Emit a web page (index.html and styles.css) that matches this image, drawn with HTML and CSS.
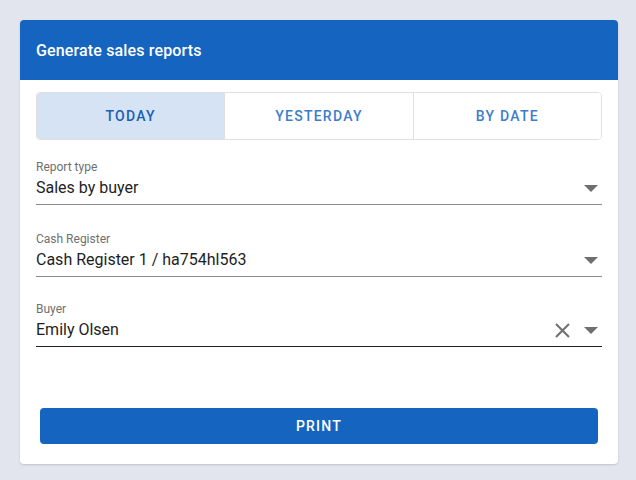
FILE: index.html
```html
<!DOCTYPE html>
<html lang="en">
<head>
  <meta charset="UTF-8" />
  <meta name="viewport" content="width=device-width, initial-scale=1" />
  <title>Generate sales reports</title>
  <link rel="stylesheet" href="styles.css">
</head>
<body>

  <div class="card">
    <div class="card-header">Generate sales reports</div>

    <div class="card-body">
      <div class="tabs">
        <button class="tab active">Today</button>
        <button class="tab">Yesterday</button>
        <button class="tab">By date</button>
      </div>

      <div class="field">
        <div class="field-label">Report type</div>
        <div class="field-row">
          <span class="field-value">Sales by buyer</span>
          <svg class="arrow" width="14" height="7" viewBox="0 0 14 7"><path d="M0 0h14L7 7z" /></svg>
        </div>
      </div>

      <div class="field">
        <div class="field-label">Cash Register</div>
        <div class="field-row">
          <span class="field-value">Cash Register 1 / ha754hl563</span>
          <svg class="arrow" width="14" height="7" viewBox="0 0 14 7"><path d="M0 0h14L7 7z" /></svg>
        </div>
      </div>

      <div class="field focused">
        <div class="field-label">Buyer</div>
        <div class="field-row">
          <span class="field-value">Emily Olsen</span>
          <svg class="clear" width="15" height="15" viewBox="0 0 15 15"><path d="M1 1l13 13M14 1L1 14" /></svg>
          <svg class="arrow" width="14" height="7" viewBox="0 0 14 7"><path d="M0 0h14L7 7z" /></svg>
        </div>
      </div>

      <button class="print-btn">Print</button>
    </div>
  </div>

</body>
</html>
```

FILE: styles.css
```css
body {
  margin: 0;
  padding: 20px;
  background: #e2e5ee;
  font-family: Roboto, "Liberation Sans", sans-serif;
}

.card {
  width: 598px;
  background: #fff;
  border-radius: 4px;
  box-shadow: 0 1px 2px rgba(0,0,0,0.15);
  overflow: hidden;
}

.card-header {
  height: 60px;
  display: flex;
  align-items: center;
  padding: 0 16px;
  background: #1565c0;
  color: #fff;
  font-size: 16px;
  font-weight: 500;
  letter-spacing: 0.15px;
}

.card-body {
  padding: 12px 16px 20px;
}

.tabs {
  display: flex;
  border: 1px solid #e0e0e0;
  border-radius: 4px;
  overflow: hidden;
}

.tab {
  flex: 1;
  height: 46px;
  border: none;
  border-left: 1px solid #e0e0e0;
  background: #fff;
  color: #3d7dcc;
  font-family: inherit;
  font-size: 14px;
  font-weight: 500;
  letter-spacing: 1.25px;
  text-transform: uppercase;
  padding: 0;
}

.tab:first-child {
  border-left: none;
}

.tab.active {
  background: #d6e3f4;
  color: #1a5fb4;
}

.field {
  margin-top: 20px;
  border-bottom: 1px solid #8c8c8c;
}

.field + .field {
  margin-top: 27px;
}

.field + .field + .field {
  margin-top: 25px;
}

.field.focused {
  border-bottom-color: #222;
}

.field-label {
  font-size: 12px;
  line-height: 14px;
  color: #6f6f6f;
}

.field-row {
  display: flex;
  align-items: center;
  margin-top: 2px;
  padding-bottom: 4px;
}

.field-value {
  flex: 1;
  font-size: 16px;
  line-height: 24px;
  color: #1e1e1e;
}

.arrow {
  fill: #6f6f6f;
  margin-right: 4px;
}

.clear {
  fill: none;
  stroke: #6f6f6f;
  stroke-width: 2;
  margin-right: 14px;
}

.print-btn {
  display: block;
  width: calc(100% - 8px);
  height: 36px;
  margin: 61px auto 0;
  border: none;
  border-radius: 4px;
  background: #1565c0;
  color: #fff;
  font-family: inherit;
  font-size: 14px;
  font-weight: 500;
  letter-spacing: 1.25px;
  text-transform: uppercase;
}
```
